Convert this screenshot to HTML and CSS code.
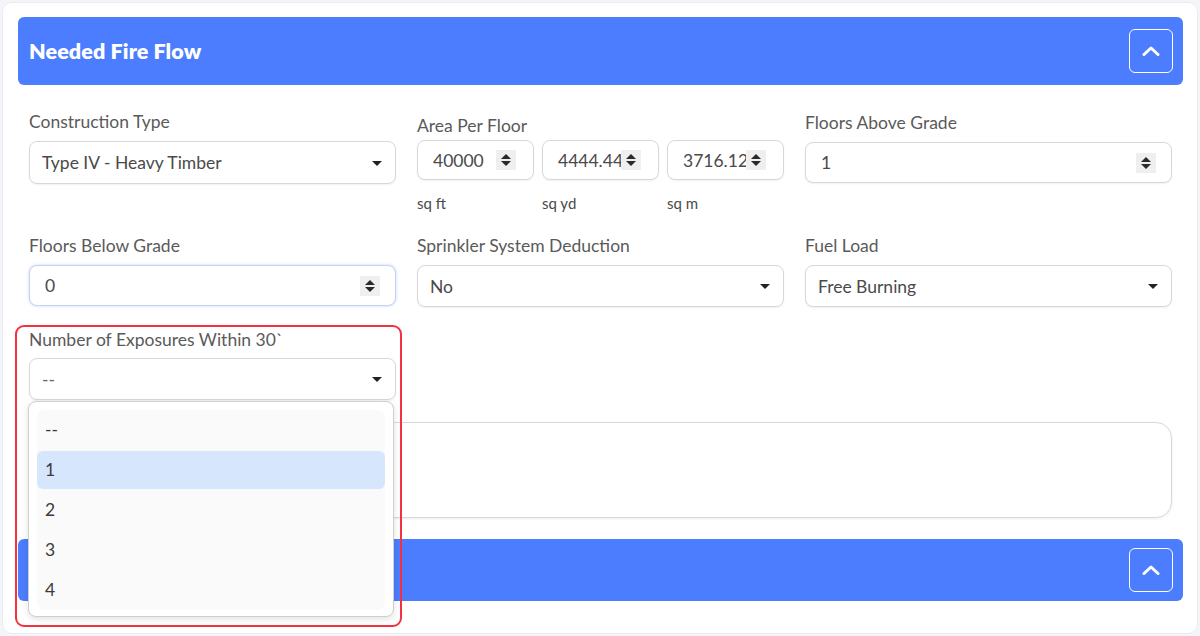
FILE: index.html
```html
<!DOCTYPE html>
<html>
<head>
<meta charset="utf-8">
<link rel="stylesheet" href="styles.css">
</head>
<body>
<div class="card">
  <div class="bar">
    <span class="bar-title">Needed Fire Flow</span>
    <button class="toggle"><svg width="18" height="10" viewBox="0 0 18 10"><path d="M2 8.5 L9 2 L16 8.5" fill="none" stroke="#fff" stroke-width="3" stroke-linecap="round" stroke-linejoin="round"/></svg></button>
  </div>

  <div class="form">
    <div class="row">
      <div class="col">
        <div class="label">Construction Type</div>
        <div class="ctl select h43"><span class="val">Type IV - Heavy Timber</span><span class="caret"></span></div>
      </div>
      <div class="col col-area">
        <div class="label">Area Per Floor</div>
        <div class="area">
          <div class="unit">
            <div class="ctl num h40"><span class="val clip">40000</span><span class="spin"><i class="up"></i><i class="dn"></i></span></div>
            <div class="unit-label">sq ft</div>
          </div>
          <div class="unit">
            <div class="ctl num h40"><span class="val clip">4444.44</span><span class="spin"><i class="up"></i><i class="dn"></i></span></div>
            <div class="unit-label">sq yd</div>
          </div>
          <div class="unit">
            <div class="ctl num h40"><span class="val clip">3716.12</span><span class="spin"><i class="up"></i><i class="dn"></i></span></div>
            <div class="unit-label">sq m</div>
          </div>
        </div>
      </div>
      <div class="col col-above">
        <div class="label">Floors Above Grade</div>
        <div class="ctl num h41"><span class="val">1</span><span class="spin"><i class="up"></i><i class="dn"></i></span></div>
      </div>
    </div>

    <div class="row row2">
      <div class="col">
        <div class="label">Floors Below Grade</div>
        <div class="ctl num h41 focus"><span class="val">0</span><span class="spin"><i class="up"></i><i class="dn"></i></span></div>
      </div>
      <div class="col">
        <div class="label">Sprinkler System Deduction</div>
        <div class="ctl select h42"><span class="val">No</span><span class="caret"></span></div>
      </div>
      <div class="col">
        <div class="label">Fuel Load</div>
        <div class="ctl select h42"><span class="val">Free Burning</span><span class="caret"></span></div>
      </div>
    </div>

    <div class="row row2">
      <div class="col col-exp">
        <div class="label">Number of Exposures Within 30`</div>
        <div class="ctl select h42"><span class="val dash">--</span><span class="caret"></span></div>
        <div class="menu">
          <div class="menu-list">
            <div class="opt">--</div>
            <div class="opt sel">1</div>
            <div class="opt">2</div>
            <div class="opt">3</div>
            <div class="opt">4</div>
          </div>
        </div>
        <div class="outline"></div>
      </div>
    </div>

    <div class="notes"></div>
  </div>

  <div class="bar bar2">
    <span class="bar-title"></span>
    <button class="toggle"><svg width="18" height="10" viewBox="0 0 18 10"><path d="M2 8.5 L9 2 L16 8.5" fill="none" stroke="#fff" stroke-width="3" stroke-linecap="round" stroke-linejoin="round"/></svg></button>
  </div>
</div>
</body>
</html>
```

FILE: styles.css
```css
* { box-sizing: border-box; }
html, body { margin: 0; padding: 0; }
body {
  background: #f4f5f8;
  font-family: Lato, "Open Sans", Arial, sans-serif;
  width: 1200px;
  height: 636px;
  overflow: hidden;
}
.card {
  position: relative;
  margin: 2px 0 0 2px;
  width: 1196px;
  height: 632px;
  background: #fff;
  border: 1px solid #ebecf1;
  border-radius: 10px;
  padding: 14px 14px 0 15px;
}
.bar {
  height: 68px;
  background: #4c7dfe;
  border-radius: 6px;
  display: flex;
  align-items: center;
  justify-content: space-between;
  padding: 0 10px 0 11px;
}
.bar2 { height: 62px; }
.bar-title {
  color: #fff;
  font-weight: 800;
  font-size: 21.5px;
  letter-spacing: 0.1px;
}
.toggle {
  width: 44px;
  height: 44px;
  border: 1.5px solid #fff;
  border-radius: 6px;
  background: transparent;
  padding: 0;
  display: flex;
  align-items: center;
  justify-content: center;
}
.form {
  padding: 26px 11px 0 11px;
}
.row {
  display: grid;
  grid-template-columns: 367px 367px 367px;
  column-gap: 21px;
  align-items: start;
}
.row2 { margin-top: 23px; }
.col { position: relative; }
.label {
  font-size: 17.5px;
  line-height: 22px;
  color: #5a5a5a;
  margin-bottom: 8px;
  white-space: nowrap;
}
.col-area { padding-top: 4px; }
.col-area .label { margin-bottom: 3px; }
.col-above .label { margin-top: 1px; }
.col-exp .label { margin-bottom: 7px; margin-top: -1px; }
.ctl {
  position: relative;
  display: flex;
  align-items: center;
  border: 1px solid #d8d8d8;
  border-radius: 8px;
  background: #fff;
  box-shadow: 0 1px 2px rgba(0,0,0,0.06);
  font-size: 17.5px;
  color: #4a4a4a;
}
.h40 { height: 40px; }
.h41 { height: 41px; }
.h42 { height: 42px; }
.h43 { height: 43px; }
.select { padding-left: 12px; }
.num { padding-left: 15px; }
.focus {
  border-color: #c5d3ee;
  box-shadow: 0 0 3px rgba(76,125,254,0.35);
}
.val { white-space: nowrap; }
.dash { color: #666; }
.caret {
  position: absolute;
  right: 13px;
  top: 50%;
  margin-top: -2px;
  width: 0; height: 0;
  border-left: 5px solid transparent;
  border-right: 5px solid transparent;
  border-top: 5px solid #222;
}
.spin {
  position: absolute;
  right: 15px;
  top: 50%;
  margin-top: -10px;
  width: 20px;
  height: 20px;
  background: #efefef;
  display: flex;
  flex-direction: column;
  align-items: center;
  justify-content: center;
  gap: 2px;
}
.spin i {
  display: block;
  width: 0; height: 0;
  border-left: 5px solid transparent;
  border-right: 5px solid transparent;
}
.spin .up { border-bottom: 5px solid #2a2a2a; }
.spin .dn { border-top: 5px solid #2a2a2a; }
.area {
  display: flex;
  gap: 8px;
}
.unit { flex: 1; min-width: 0; }
.area .num .spin { right: 17px; }
.area .clip {
  display: block;
  overflow: hidden;
  width: calc(100% - 36px);
}
.unit-label {
  font-size: 15px;
  color: #4a4a4a;
  margin-top: 14px;
  line-height: 18px;
}
.menu {
  position: absolute;
  left: -1px;
  top: 71px;
  width: 366px;
  height: 216px;
  background: #fff;
  border: 1px solid #cfcfcf;
  border-radius: 8px;
  box-shadow: 0 2px 6px rgba(0,0,0,0.12);
  padding: 8px 8px 6px;
  z-index: 5;
}
.menu-list {
  background: #fafafa;
  border-radius: 8px;
  height: 200px;
  display: flex;
  flex-direction: column;
  gap: 2px;
  padding-top: 1px;
}
.opt {
  height: 38px;
  line-height: 38px;
  flex: none;
  padding-left: 8px;
  font-size: 17.5px;
  color: #3a3a3a;
  border-radius: 6px;
}
.opt.sel { background: #d6e6fd; }
.outline {
  position: absolute;
  left: -14px;
  top: -5px;
  width: 387px;
  height: 302px;
  border: 2px solid #f2323f;
  border-radius: 9px;
  z-index: 6;
  pointer-events: none;
}
.notes {
  margin-top: 22px;
  height: 96px;
  border: 1px solid #d8d8d8;
  border-radius: 16px;
  box-shadow: 0 1px 3px rgba(0,0,0,0.08);
  margin-bottom: 21px;
}
```
